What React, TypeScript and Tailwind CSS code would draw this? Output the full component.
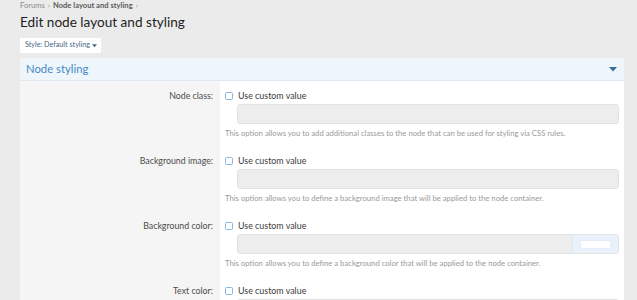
import React from "react";

const font = { fontFamily: 'Lato, "Open Sans", sans-serif' };

function Row({
  label,
  help,
  color,
}: {
  label: string;
  help: string;
  color?: boolean;
}) {
  return (
    <div className="flex">
      <div className="w-[200px] shrink-0 bg-[#f5f5f5] pt-[9px] pb-[8px] pr-[7px] text-right text-[8.8px] leading-[12px] text-[#4b4b4b]">
        {label}
      </div>
      <div className="flex-1 pt-[9px] pb-[8px] pl-[5px] pr-[5px]">
        <div className="flex h-[12px] items-center">
          <span className="h-[8px] w-[8px] rounded-[1.5px] border border-[#8ab5de] bg-white" />
          <span className="ml-[5px] text-[8.9px] leading-[12px] text-[#3a3a3a]">Use custom value</span>
        </div>
        <div className="ml-[12px] mt-[2px] flex h-[20px] overflow-hidden rounded-[3px] border border-[#e3e3e3] bg-[#ededed]">
          <div className="flex-1" />
          {color && (
            <div className="flex w-[46px] items-center justify-center border-l border-[#dde8f3] bg-[#e9f1fa]">
              <div className="h-[9px] w-[31px] rounded-[1px] border border-[#e4ecf5] bg-white" />
            </div>
          )}
        </div>
        <div className="mt-[4px] h-[10px] whitespace-nowrap text-[7.7px] leading-[10px] text-[#9a9a9a]">
          {help}
        </div>
      </div>
    </div>
  );
}

export default function App() {
  return (
    <div className="min-h-[300px] w-[637px] overflow-hidden bg-[#ebebeb]" style={font}>
      <div className="pl-[20px] pr-[13px]">
        <div className="flex h-[10px] items-center pt-[1px] text-[7.6px] leading-[9px] text-[#8d8d8d]">
          <span>Forums</span>
          <span className="mx-[3px] text-[#9a9a9a]">›</span>
          <span className="font-bold text-[#5a5a5a]">Node layout and styling</span>
          <span className="mx-[3px] text-[#9a9a9a]">›</span>
        </div>
        <h1 className="mt-[2px] text-[13.6px] leading-[20px] text-[#1e1e1e]">Edit node layout and styling</h1>
        <div className="mt-[6px] flex">
          <div className="flex h-[15px] w-[81px] items-center justify-center bg-white pl-[1px] text-[7.2px] text-[#4a6685]">
            Style: Default styling
            <svg width="5" height="4" viewBox="0 0 6 4" className="ml-[2px]">
              <path d="M0 0 L6 0 L3 3.5 Z" fill="#4a6685" />
            </svg>
          </div>
        </div>
        <div className="mt-[5px] overflow-hidden rounded-t-[3px]">
          <div className="flex h-[23px] items-center justify-between border-b border-[#dfe8f0] bg-[#eef6fc] pl-[6px] pr-[7px]">
            <span className="text-[11.3px] text-[#4588c6]">Node styling</span>
            <svg width="8" height="5" viewBox="0 0 8 5">
              <path d="M0 0 L8 0 L4 4.5 Z" fill="#3a6d9e" />
            </svg>
          </div>
          <div className="bg-white">
            <Row
              label="Node class:"
              help="This option allows you to add additional classes to the node that can be used for styling via CSS rules."
            />
            <Row
              label="Background image:"
              help="This option allows you to define a background image that will be applied to the node container."
            />
            <Row
              label="Background color:"
              color
              help="This option allows you to define a background color that will be applied to the node container."
            />
            <Row label="Text color:" help="" />
          </div>
        </div>
      </div>
    </div>
  );
}
